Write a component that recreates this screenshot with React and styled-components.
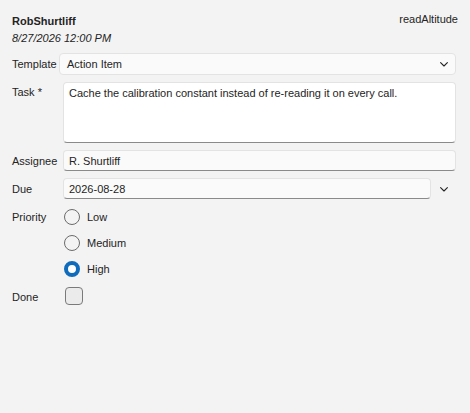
import React from "react";
import styled, { createGlobalStyle } from "styled-components";

const GlobalStyle = createGlobalStyle`
  html, body {
    margin: 0;
    padding: 0;
    background: #f3f3f3;
  }
  body {
    font-family: "Liberation Sans", Arial, sans-serif;
    color: #242424;
  }
`;

const Chevron = () => (
  <svg width="8" height="5" viewBox="0 0 8 5" fill="none">
    <path d="M0.6 0.6l3.4 3.4 3.4-3.4" stroke="#242424" strokeWidth="1.1" strokeLinecap="round" strokeLinejoin="round" />
  </svg>
);

export default function App() {
  return (
    <Page>
      <GlobalStyle />
      <Header>
        <div>
          <Author>RobShurtliff</Author>
          <Stamp>8/27/2026 12:00 PM</Stamp>
        </div>
        <Source>readAltitude</Source>
      </Header>

      <Form>
        <Label>Template</Label>
        <Select>
          <span>Action Item</span>
          <Chevron />
        </Select>

        <Label $top={3}>Task *</Label>
        <TextArea $inset>Cache the calibration constant instead of re-reading it on every call.</TextArea>

        <Label>Assignee</Label>
        <Input $inset>R. Shurtliff</Input>

        <Label>Due</Label>
        <DueRow>
          <Input $inset>2026-08-28</Input>
          <ChevronButton>
            <Chevron />
          </ChevronButton>
        </DueRow>

        <Label $top={4}>Priority</Label>
        <RadioGroup>
          <Option>
            <Radio />
            <span>Low</span>
          </Option>
          <Option>
            <Radio />
            <span>Medium</span>
          </Option>
          <Option>
            <Radio $checked />
            <span>High</span>
          </Option>
        </RadioGroup>

        <Label $top={6}>Done</Label>
        <Check />
      </Form>
    </Page>
  );
}

const Page = styled.div`
  width: 470px;
  height: 413px;
  box-sizing: border-box;
  padding: 14px 14px 0 12px;
  font-size: 11px;
`;

const Header = styled.div`
  display: flex;
  justify-content: space-between;
  align-items: flex-start;
`;

const Author = styled.div`
  font-weight: 700;
  font-size: 11px;
  line-height: 14px;
`;

const Stamp = styled.div`
  font-style: italic;
  font-size: 11px;
  line-height: 16px;
  margin-top: 2px;
`;

const Source = styled.div`
  font-size: 11px;
  line-height: 14px;
  margin-top: -2px;
  margin-right: -2px;
`;

const Form = styled.div`
  display: grid;
  grid-template-columns: 47px 1fr;
  row-gap: 7px;
  margin-top: 7px;
`;

const Label = styled.div`
  padding-top: ${(p) => (p.$top != null ? p.$top : 4)}px;
  line-height: 14px;
`;

const Field = styled.div`
  box-sizing: border-box;
  margin-left: ${(p) => (p.$inset ? 4 : 0)}px;
  background: #fafafa;
  border: 1px solid #e3e3e3;
  border-bottom: 1px solid #8a8a8a;
  border-radius: 4px;
  padding: 0 5px;
  line-height: 20px;
`;

const Select = styled(Field)`
  height: 22px;
  display: flex;
  align-items: center;
  justify-content: space-between;
  padding: 0 7px 0 7px;
  border-bottom-color: #e3e3e3;
`;

const TextArea = styled(Field)`
  background: #fff;
  height: 61px;
  padding: 3px 5px;
  line-height: 14px;
`;

const Input = styled(Field)`
  height: 21px;
  flex: 1;
`;

const DueRow = styled.div`
  display: flex;
  align-items: center;
`;

const ChevronButton = styled.div`
  width: 25px;
  display: flex;
  justify-content: center;
  padding-top: 2px;
`;

const RadioGroup = styled.div`
  display: flex;
  flex-direction: column;
  gap: 10px;
  margin: 3px 0 0 5px;
`;

const Option = styled.div`
  display: flex;
  align-items: center;
  gap: 7px;
  height: 16px;
`;

const Radio = styled.span`
  box-sizing: border-box;
  width: 16px;
  height: 16px;
  border-radius: 50%;
  background: ${(p) => (p.$checked ? "#fff" : "#f3f3f3")};
  border: ${(p) => (p.$checked ? "4px solid #0f6cbd" : "1px solid #6b6b6b")};
`;

const Check = styled.span`
  box-sizing: border-box;
  width: 18px;
  height: 18px;
  margin: 3px 0 0 6px;
  border-radius: 4px;
  background: #ebebeb;
  border: 1px solid #7a7a7a;
`;
